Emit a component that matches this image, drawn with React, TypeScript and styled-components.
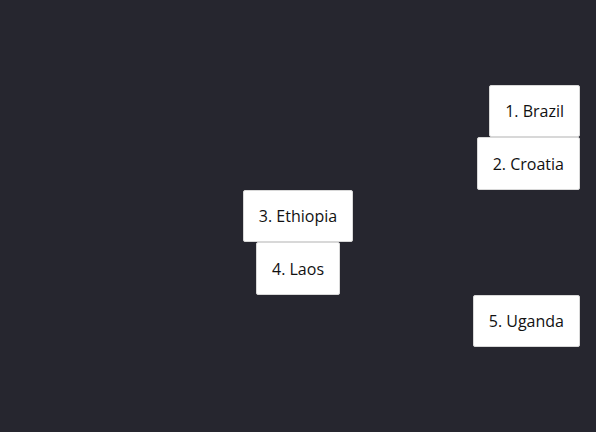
import React from "react";
import styled, { createGlobalStyle } from "styled-components";

const Global = createGlobalStyle`
  html, body { margin: 0; padding: 0; background: #26262f; }
  body { font-family: "Open Sans", "Noto Sans", sans-serif; }
`;

const Stage = styled.div`
  box-sizing: border-box;
  width: 100%;
  height: 432px;
  display: flex;
  flex-direction: column;
  justify-content: center;
  padding: 0 16px;
`;

const Card = styled.div<{ $align: "end" | "center" }>`
  align-self: ${(p) => (p.$align === "end" ? "flex-end" : "center")};
  box-sizing: border-box;
  background: #ffffff;
  border: 1px solid #d8d8d8;
  border-radius: 2px;
  padding: 15.25px 15px;
  font-size: 16px;
  line-height: 20px;
  color: #111;
  white-space: nowrap;
`;

const items: { label: string; align: "end" | "center" }[] = [
  { label: "1. Brazil", align: "end" },
  { label: "2. Croatia", align: "end" },
  { label: "3. Ethiopia", align: "center" },
  { label: "4. Laos", align: "center" },
  { label: "5. Uganda", align: "end" },
];

export default function App() {
  return (
    <>
      <Global />
      <Stage>
        {items.map((it) => (
          <Card key={it.label} $align={it.align}>
            {it.label}
          </Card>
        ))}
      </Stage>
    </>
  );
}
